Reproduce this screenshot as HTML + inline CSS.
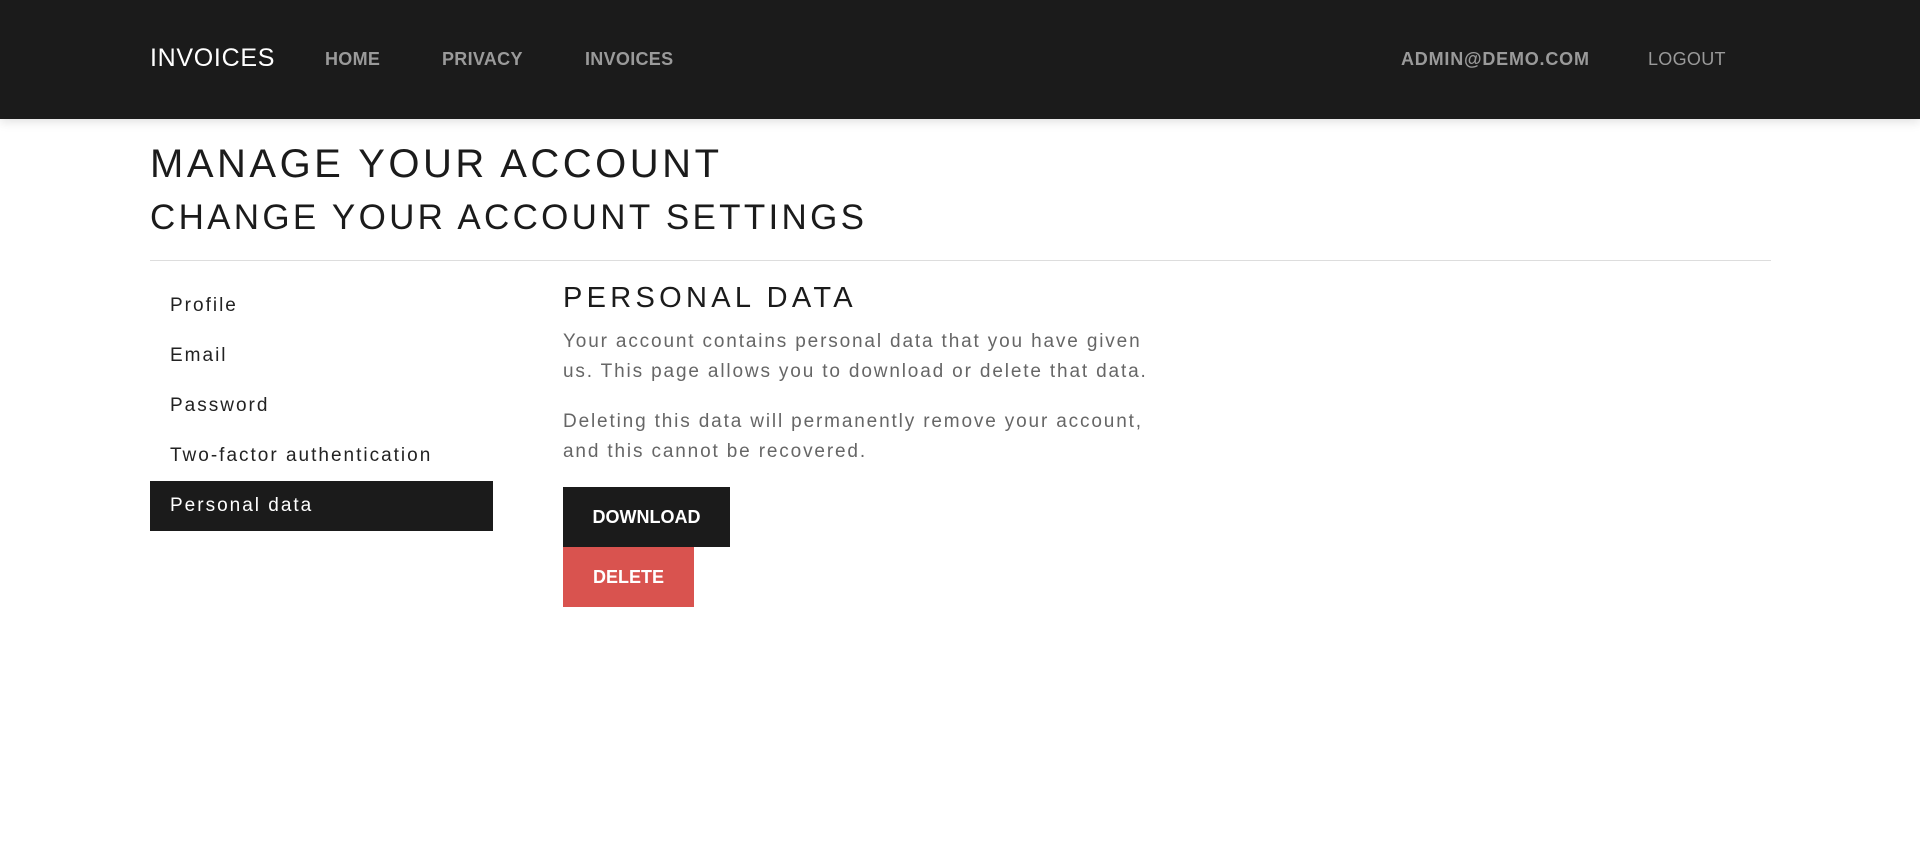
<!DOCTYPE html>
<html><head><meta charset="utf-8"><style>
*{margin:0;padding:0;box-sizing:border-box}
html,body{width:1920px;height:860px;overflow:hidden;background:#fff;font-family:"Liberation Sans",sans-serif}
.nav{position:absolute;left:0;top:0;width:1920px;height:119px;background:#1b1b1b;box-shadow:0 3px 10px rgba(0,0,0,.12)}
.nav span{position:absolute;white-space:nowrap}
.brand{left:150px;top:44px;font-size:25px;color:#fff;letter-spacing:.7px}
.ni{top:49px;font-size:18px;color:#9a9a9a;font-weight:bold;letter-spacing:.3px}
h1{position:absolute;left:150px;top:142px;font-size:40px;font-weight:normal;color:#1b1b1b;letter-spacing:3.5px;white-space:nowrap}
h2{position:absolute;left:150px;top:198px;font-size:35px;font-weight:normal;color:#1b1b1b;letter-spacing:3.3px;white-space:nowrap}
hr{position:absolute;left:150px;top:260px;width:1621px;border:0;border-top:1px solid #ddd}
.side{position:absolute;left:150px;top:281px;width:343px}
.side div{height:50px;line-height:50px;padding-left:20px;font-size:19px;color:#222;letter-spacing:2px}
.side .act{background:#1b1b1b;color:#fff}
h3{position:absolute;left:563px;top:282px;font-size:29px;font-weight:normal;color:#1b1b1b;letter-spacing:4.3px;white-space:nowrap}
p{position:absolute;left:563px;font-size:19px;line-height:30px;color:#666;letter-spacing:1.85px;width:700px;white-space:nowrap}
.btn{position:absolute;left:563px;color:#fff;font-size:18px;font-weight:bold;text-align:center;line-height:60px;height:60px}
</style></head><body>
<div class="nav">
<span class="brand">INVOICES</span>
<span class="ni" style="left:325px">HOME</span>
<span class="ni" style="left:442px">PRIVACY</span>
<span class="ni" style="left:585px">INVOICES</span>
<span class="ni" style="left:1401px;letter-spacing:.8px">ADMIN@DEMO.COM</span>
<span class="ni" style="left:1648px;font-weight:normal">LOGOUT</span>
</div>
<h1>MANAGE YOUR ACCOUNT</h1>
<h2>CHANGE YOUR ACCOUNT SETTINGS</h2>
<hr>
<div class="side">
<div>Profile</div><div>Email</div><div>Password</div><div>Two-factor authentication</div><div class="act">Personal data</div>
</div>
<h3>PERSONAL DATA</h3>
<p style="top:327px">Your account contains personal data that you have given<br>us. This page allows you to download or delete that data.</p>
<p style="top:407px">Deleting this data will permanently remove your account,<br>and this cannot be recovered.</p>
<div class="btn" style="top:487px;width:167px;background:#1b1b1b">DOWNLOAD</div>
<div class="btn" style="top:547px;width:131px;background:#d9534f">DELETE</div>
</body></html>
